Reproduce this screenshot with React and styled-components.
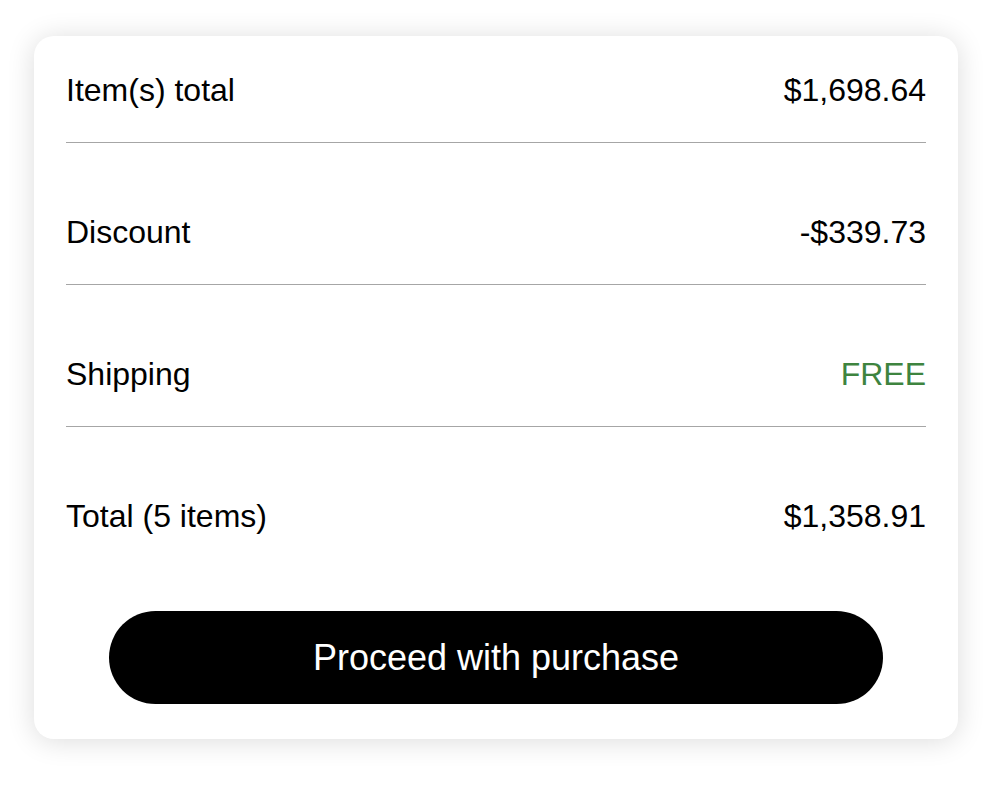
import React from 'react';
import styled, { createGlobalStyle } from 'styled-components';

const GlobalStyle = createGlobalStyle`
  body {
    margin: 0;
    background: #fff;
    font-family: "Liberation Sans", Arial, Helvetica, sans-serif;
    color: #000;
  }
`;

const Page = styled.div`
  padding: 36px 34px;
`;

const Card = styled.div`
  background: #fff;
  border-radius: 20px;
  box-shadow: 0 2px 28px rgba(0, 0, 0, 0.14);
  padding: 34px 32px 35px;
  display: flex;
  flex-direction: column;
`;

const Rows = styled.div`
  display: flex;
  flex-direction: column;
  gap: 69px;
`;

const Row = styled.div`
  display: flex;
  justify-content: space-between;
  align-items: center;
  font-size: 32px;
  line-height: 40px;
  padding-bottom: ${(p) => (p.$last ? '0' : '32px')};
  border-bottom: ${(p) => (p.$last ? 'none' : '1px solid #a6a6a6')};
`;

const Value = styled.span`
  color: ${(p) => (p.$free ? '#3e843f' : '#000')};
`;

const Button = styled.button`
  align-self: center;
  width: 90%;
  height: 93px;
  margin-top: 75px;
  border: none;
  border-radius: 47px;
  background: #000;
  color: #fff;
  font-family: "Liberation Sans", Arial, Helvetica, sans-serif;
  font-size: 36px;
  cursor: pointer;
`;

const rows = [
  { label: 'Item(s) total', value: '$1,698.64' },
  { label: 'Discount', value: '-$339.73' },
  { label: 'Shipping', value: 'FREE', free: true },
  { label: 'Total (5 items)', value: '$1,358.91' },
];

export default function App() {
  return (
    <>
      <GlobalStyle />
      <Page>
        <Card>
          <Rows>
            {rows.map((r, i) => (
              <Row key={r.label} $last={i === rows.length - 1}>
                <span>{r.label}</span>
                <Value $free={r.free}>{r.value}</Value>
              </Row>
            ))}
          </Rows>
          <Button>Proceed with purchase</Button>
        </Card>
      </Page>
    </>
  );
}
